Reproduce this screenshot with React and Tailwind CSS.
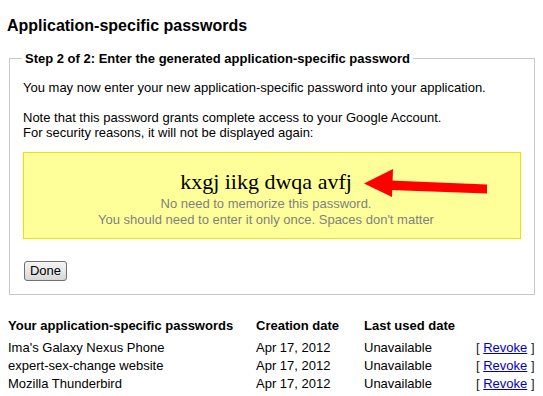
import React from "react";

const rows = [
  ["Ima's Galaxy Nexus Phone", "Apr 17, 2012", "Unavailable"],
  ["expert-sex-change website", "Apr 17, 2012", "Unavailable"],
  ["Mozilla Thunderbird", "Apr 17, 2012", "Unavailable"],
];

export default function App() {
  return (
    <div className="w-[543px] h-[396px] overflow-hidden bg-white text-black font-['Liberation_Sans',Arial,sans-serif] text-[13px] leading-[15px]">
      <h1 className="mt-[16px] ml-[7px] text-[16px] leading-[20px] font-bold">
        Application-specific passwords
      </h1>

      <fieldset className="mt-[15px] ml-[9px] w-[526px] border border-[#c8c8c8] px-[13px] pt-[14px] pb-[13px]">
        <legend className="ml-[-1px] px-[3px] font-bold text-[13px] leading-[15px]">
          Step 2 of 2: Enter the generated application-specific password
        </legend>
        <p>You may now enter your new application-specific password into your application.</p>
        <p className="mt-[15px]">
          Note that this password grants complete access to your Google Account.
          <br />
          For security reasons, it will not be displayed again:
        </p>

        <div className="relative mt-[12px] h-[87px] border border-[#e6e600] bg-[#ffff99] pt-[16px] pr-[12px] text-center">
          <div className="font-['Liberation_Serif','Times_New_Roman',serif] text-[22px] leading-[25px] text-black">
            kxgj iikg dwqa avfj
          </div>
          <div className="mt-[2px] text-[#7f7f7f] leading-[16px]">No need to memorize this password.</div>
          <div className="text-[#7f7f7f] leading-[16px]">
            You should need to enter it only once. Spaces don't matter
          </div>
          <svg
            className="absolute left-0 top-0 pointer-events-none overflow-visible"
            width="498"
            height="87"
            viewBox="0 0 498 87"
          >
            <polygon points="340,30.5 369,16 368,44" fill="#ff0000" />
            <polygon points="366,27.5 463,31.5 463,40.5 366,37" fill="#ff0000" />
          </svg>
        </div>

        <button className="mt-[22px] ml-[1px] block h-[20px] w-[43px] rounded-[3px] border border-[#707070] bg-linear-to-b from-[#f4f4f4] via-[#e8e8e8] to-[#d6d6d6] text-[13px] leading-[16px] text-black">
          Done
        </button>
      </fieldset>

      <div className="mt-[20px] pl-[8px] grid grid-cols-[248px_108px_112px_auto]">
        <div className="font-bold leading-[22px] h-[24px]">Your application-specific passwords</div>
        <div className="font-bold leading-[22px] h-[24px]">Creation date</div>
        <div className="font-bold leading-[22px] h-[24px]">Last used date</div>
        <div className="h-[24px]"></div>
        {rows.map((r) => (
          <React.Fragment key={r[0]}>
            <div className="leading-[18px]">{r[0]}</div>
            <div className="leading-[18px]">{r[1]}</div>
            <div className="leading-[18px]">{r[2]}</div>
            <div className="leading-[18px] text-[#222]">
              [ <a href="#" className="text-[#0000cc] underline">Revoke</a> ]
            </div>
          </React.Fragment>
        ))}
      </div>
    </div>
  );
}
